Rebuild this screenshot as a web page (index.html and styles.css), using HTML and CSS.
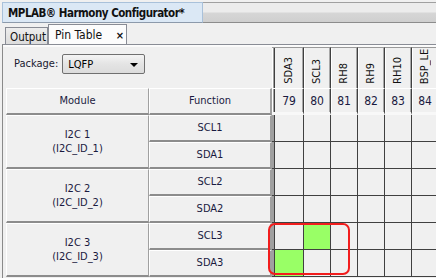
FILE: index.html
```html
<!DOCTYPE html>
<html>
<head>
<meta charset="utf-8">
<link rel="stylesheet" href="styles.css">
</head>
<body>
<div class="title-bar">
  <div class="title-tab">MPLAB® Harmony Configurator*</div>
  <div class="title-rest"></div>
</div>
<div class="tabs">
  <div class="tab">Output</div>
  <div class="tab active">Pin Table <span class="close">×</span></div>
</div>
<div class="panel">
  <div class="grid">
    <div class="package">
      <span class="pkg-label">Package:</span>
      <div class="combo"><span>LQFP</span><span class="arrow"></span></div>
    </div>
    <div class="pin-head first"><span class="vlabel">SDA3</span></div>
    <div class="pin-head"><span class="vlabel">SCL3</span></div>
    <div class="pin-head"><span class="vlabel">RH8</span></div>
    <div class="pin-head"><span class="vlabel">RH9</span></div>
    <div class="pin-head"><span class="vlabel">RH10</span></div>
    <div class="pin-head"><span class="vlabel">BSP_LED</span></div>

    <div class="hcell">Module</div>
    <div class="hcell fn">Function</div>
    <div class="num first">79</div>
    <div class="num">80</div>
    <div class="num">81</div>
    <div class="num">82</div>
    <div class="num">83</div>
    <div class="num">84</div>

    <div class="hcell module span2">I2C 1<br>(I2C_ID_1)</div>
    <div class="hcell fn">SCL1</div>
    <div class="pc first"></div><div class="pc"></div><div class="pc"></div><div class="pc"></div><div class="pc"></div><div class="pc"></div>
    <div class="hcell fn">SDA1</div>
    <div class="pc first"></div><div class="pc"></div><div class="pc"></div><div class="pc"></div><div class="pc"></div><div class="pc"></div>

    <div class="hcell module span2">I2C 2<br>(I2C_ID_2)</div>
    <div class="hcell fn">SCL2</div>
    <div class="pc first"></div><div class="pc"></div><div class="pc"></div><div class="pc"></div><div class="pc"></div><div class="pc"></div>
    <div class="hcell fn">SDA2</div>
    <div class="pc first"></div><div class="pc"></div><div class="pc"></div><div class="pc"></div><div class="pc"></div><div class="pc"></div>

    <div class="hcell module span2">I2C 3<br>(I2C_ID_3)</div>
    <div class="hcell fn">SCL3</div>
    <div class="pc first"></div><div class="pc on"></div><div class="pc"></div><div class="pc"></div><div class="pc"></div><div class="pc"></div>
    <div class="hcell fn">SDA3</div>
    <div class="pc first on"></div><div class="pc"></div><div class="pc"></div><div class="pc"></div><div class="pc"></div><div class="pc"></div>
  </div>
  <div class="highlight"></div>
</div>
</body>
</html>
```
FILE: styles.css
```css
html, body {
  margin: 0;
  padding: 0;
  background: #f0f0f0;
  overflow: hidden;
  width: 436px;
  height: 278px;
}
body {
  font-family: "DejaVu Sans Condensed", "DejaVu Sans", sans-serif;
  font-stretch: condensed;
  font-size: 11px;
  color: #1a1a40;
}
.title-bar {
  display: flex;
  height: 23px;
  box-sizing: border-box;
  padding-top: 2px;
  background: #f0f0f0;
}
.title-tab {
  width: 201px;
  margin-left: 2px;
  box-sizing: border-box;
  border: 1px solid #a9c1da;
  border-bottom: 1px solid #8c9aab;
  background: #dbe8f5;
  font-weight: bold;
  font-size: 11.5px;
  letter-spacing: -0.5px;
  color: #111;
  padding: 3px 0 0 5px;
  white-space: nowrap;
  overflow: hidden;
}
.title-rest {
  flex: 1;
  border-top: 1px solid #a0a0a0;
  border-bottom: 1px solid #8c8c8c;
  background: linear-gradient(#ececec 0, #ececec 9px, #d6d6d6 10px, #cfcfcf 100%);
}
.tabs {
  display: flex;
  align-items: flex-end;
  height: 21px;
  padding-left: 5px;
  box-sizing: border-box;
}
.tab {
  width: 43px;
  height: 17px;
  box-sizing: border-box;
  border: 1px solid #898c95;
  border-bottom: none;
  background: linear-gradient(#ededed, #dcdcdc);
  padding: 2px 0 0 4px;
  color: #111;
  font-size: 11.5px;
  white-space: nowrap;
  overflow: hidden;
}
.tab.active {
  width: 79px;
  height: 21px;
  background: #fcfcfc;
  padding: 3px 0 0 6px;
  margin-bottom: -1px;
  font-size: 12px;
}
.close {
  font-size: 11px;
  font-weight: bold;
  margin-left: 10px;
}
.panel {
  position: relative;
  border-top: 1px solid #898c95;
  border-left: 1px solid #8a8a8a;
  margin-left: 2px;
  padding: 2px 0 0 3px;
  height: 240px;
  box-sizing: border-box;
  background: #f0f0f0;
  box-shadow: inset 0 1px 0 #fcfcfc, inset 0 2px 0 #fafafa;
}
.grid {
  display: grid;
  grid-template-columns: 143px 123px 32px repeat(5, 27px);
  grid-template-rows: 41px 27px repeat(6, 27px);
  width: 433px;
  overflow: hidden;
}
.package {
  grid-column: 1 / 3;
  display: flex;
  align-items: flex-start;
  padding: 7px 0 0 8px;
  gap: 4px;
}
.pkg-label {
  padding-top: 3px;
  color: #1a1a30;
}
.combo {
  width: 83px;
  height: 20px;
  box-sizing: border-box;
  border: 1px solid #707070;
  border-radius: 2px;
  background: linear-gradient(#f4f4f4, #e4e4e4 50%, #dcdcdc);
  display: flex;
  align-items: center;
  justify-content: space-between;
  padding: 0 6px 0 5px;
  color: #000;
}
.arrow {
  width: 0;
  height: 0;
  border-left: 4px solid transparent;
  border-right: 4px solid transparent;
  border-top: 4px solid #000;
  margin-top: 2px;
}
.pin-head, .num {
  background: #f0f0f0;
  border-right: 1px solid #404040;
  box-shadow: inset -1px 0 0 #a8a8a8, inset 1px 0 0 #fff;
  box-sizing: border-box;
  min-width: 0;
}
.pin-head {
  display: flex;
  justify-content: center;
  align-items: flex-end;
  padding-bottom: 4px;
  overflow: hidden;
  border-top: 1px solid #9a9a9a;
}
.num {
  display: flex;
  justify-content: center;
  align-items: center;
  border-top: 1px solid #fff;
  border-bottom: 3px solid #f8f8f8;
  padding-top: 1px;
  font-size: 12px;
}
.first {
  padding-left: 3px;
  background-image: linear-gradient(to right, #a0a0a0 0, #a0a0a0 2px, #404040 2px, #404040 3px, transparent 3px);
}
.vlabel {
  writing-mode: vertical-rl;
  transform: rotate(180deg);
  white-space: nowrap;
  line-height: 12px;
  color: #111;
}
.hcell {
  display: flex;
  justify-content: center;
  align-items: center;
  text-align: center;
  box-sizing: border-box;
  background: #f0f0f0;
  border-top: 1px solid #fff;
  border-left: 1px solid #fff;
  border-right: 1px solid #a0a0a0;
  border-bottom: 2px solid #8c8c8c;
  line-height: 14px;
}
.hcell.fn {
  border-right: 2px solid #a0a0a0;
}
.span2 {
  grid-row: span 2;
}
.pc {
  box-sizing: border-box;
  background-color: #f0f0f0;
  border-right: 1px solid #404040;
  border-bottom: 1px solid #404040;
}
.pc.on {
  background-color: #99ff66;
}
.highlight {
  position: absolute;
  left: 265px;
  top: 178px;
  width: 82px;
  height: 52px;
  box-sizing: border-box;
  border: 2px solid #f21d1d;
  border-radius: 7px;
}
```
